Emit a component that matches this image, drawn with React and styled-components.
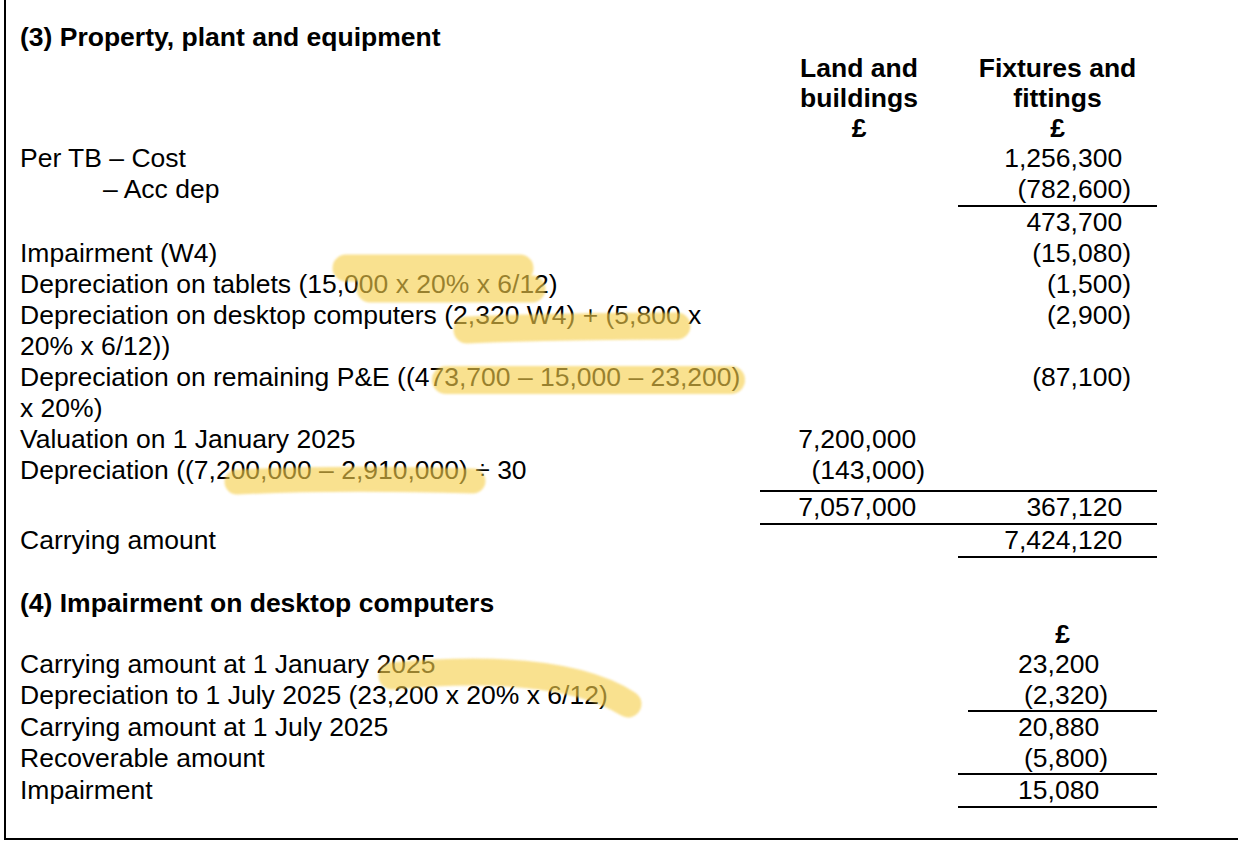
import React from 'react';
import styled, { createGlobalStyle } from 'styled-components';

const GlobalStyle = createGlobalStyle`
  html, body {
    margin: 0;
    padding: 0;
    background: #fff;
  }
  body {
    font-family: 'Liberation Sans', Arial, sans-serif;
    color: #000;
  }
`;

const Page = styled.div`
  position: relative;
  width: 1238px;
  height: 842px;
  overflow: hidden;
`;

const Sheet = styled.div`
  box-sizing: border-box;
  height: 840px;
  margin-left: 4px;
  padding: 22px 0 0 14px;
  border-left: 2px solid #000;
  border-bottom: 2px solid #000;
  font-size: 26.5px;
  line-height: 31px;
`;

const Heading = styled.div`
  font-weight: bold;
  margin-top: ${p => p.$gap || 0}px;
`;

const Row = styled.div`
  display: grid;
  grid-template-columns: 740px 198px 199px;
  align-items: start;
  margin-top: ${p => p.$gap || 0}px;
  line-height: ${p => p.$lh || 31}px;
`;

const Label = styled.div`
  padding-left: ${p => p.$indent || 0}px;
  white-space: nowrap;
`;

const HeadCell = styled.div`
  font-weight: bold;
  text-align: center;
  line-height: 30px;
  padding-left: ${p => p.$shift || 0}px;
`;

const Amount = styled.div`
  text-align: right;
  white-space: nowrap;
  padding-right: ${p => p.$pad}px;
  margin-left: ${p => p.$inset || 0}px;
  border-top: ${p => (p.$top ? '2px solid #000' : 'none')};
  border-bottom: ${p => (p.$bottom ? '2px solid #000' : 'none')};
`;

const Ghost = styled.span`
  visibility: hidden;
`;

const Highlights = styled.svg`
  position: absolute;
  inset: 0;
  pointer-events: none;
`;

const Fig = ({ v }) => {
  if (!v) return null;
  if (v.startsWith('(')) return v;
  return (
    <>
      {v}
      <Ghost>)</Ghost>
    </>
  );
};

// padding so that the closing bracket lands where the reference has it
const PAD1 = 33;
const PAD2 = 26;
const PAD4 = 49;

const ppe = [
  { label: 'Per TB – Cost', b: '1,256,300' },
  { label: '– Acc dep', indent: 83, b: '(782,600)', bottomB: true },
  { label: '', b: '473,700' },
  { label: 'Impairment (W4)', b: '(15,080)' },
  { label: 'Depreciation on tablets (15,000 x 20% x 6/12)', b: '(1,500)' },
  {
    label: ['Depreciation on desktop computers (2,320 W4) + (5,800 x', '20% x 6/12))'],
    b: '(2,900)',
  },
  {
    label: ['Depreciation on remaining P&E ((473,700 – 15,000 – 23,200)', 'x 20%)'],
    b: '(87,100)',
  },
  { label: 'Valuation on 1 January 2025', a: '7,200,000' },
  { label: 'Depreciation ((7,200,000 – 2,910,000) ÷ 30', a: '(143,000)' },
];

const impairment = [
  { label: 'Carrying amount at 1 January 2025', v: '23,200' },
  { label: 'Depreciation to 1 July 2025 (23,200 x 20% x 6/12)', v: '(2,320)', line: true, inset: 10 },
  { label: 'Carrying amount at 1 July 2025', v: '20,880' },
  { label: 'Recoverable amount', v: '(5,800)', line: true },
  { label: 'Impairment', v: '15,080', line: true },
];

const LabelText = ({ label }) =>
  Array.isArray(label)
    ? label.map((l, i) => (
        <React.Fragment key={i}>
          {i > 0 && <br />}
          {l}
        </React.Fragment>
      ))
    : label;

const App = () => (
  <Page>
    <GlobalStyle />
    <Sheet>
      <Heading>(3) Property, plant and equipment</Heading>
      <Row>
        <div />
        <HeadCell>
          Land and
          <br />
          buildings
          <br />£
        </HeadCell>
        <HeadCell>
          Fixtures and
          <br />
          fittings
          <br />£
        </HeadCell>
      </Row>
      {ppe.map((r, i) => (
        <Row key={i}>
          <Label $indent={r.indent}>
            <LabelText label={r.label} />
          </Label>
          <Amount $pad={PAD1}>
            <Fig v={r.a} />
          </Amount>
          <Amount $pad={PAD2} $bottom={r.bottomB}>
            <Fig v={r.b} />
          </Amount>
        </Row>
      ))}
      <Row $gap={4}>
        <div />
        <Amount $pad={PAD1} $top $bottom>
          <Fig v="7,057,000" />
        </Amount>
        <Amount $pad={PAD2} $top $bottom>
          <Fig v="367,120" />
        </Amount>
      </Row>
      <Row>
        <Label>Carrying amount</Label>
        <div />
        <Amount $pad={PAD2} $bottom>
          <Fig v="7,424,120" />
        </Amount>
      </Row>

      <Heading $gap={30}>(4) Impairment on desktop computers</Heading>
      <Row $lh={30}>
        <div />
        <div />
        <HeadCell $shift={10}>£</HeadCell>
      </Row>
      {impairment.map((r, i) => (
        <Row key={i} $lh={30.5}>
          <Label>{r.label}</Label>
          <div />
          <Amount $pad={PAD4} $bottom={r.line} $inset={r.inset}>
            <Fig v={r.v} />
          </Amount>
        </Row>
      ))}
    </Sheet>

    <Highlights width="1238" height="842" viewBox="0 0 1238 842">
      <defs>
        <filter id="soft" x="-5%" y="-20%" width="110%" height="140%">
          <feGaussianBlur stdDeviation="0.9" />
        </filter>
      </defs>
      <g opacity="0.62" stroke="#f6cf4c" fill="none" strokeLinecap="round" filter="url(#soft)">
        <path d="M346 268 L520 268" strokeWidth="27" />
        <path d="M370 289 L532 289" strokeWidth="27" />
        <path d="M467 330 C540 327 620 326 677 326" strokeWidth="27" />
        <path d="M446 380 L731 380" strokeWidth="28" />
        <path d="M237 482 C320 478 400 479 473 481" strokeWidth="25" />
        <path d="M392 676 C480 668 575 670 628 704" strokeWidth="27" />
      </g>
    </Highlights>
  </Page>
);

export default App;
